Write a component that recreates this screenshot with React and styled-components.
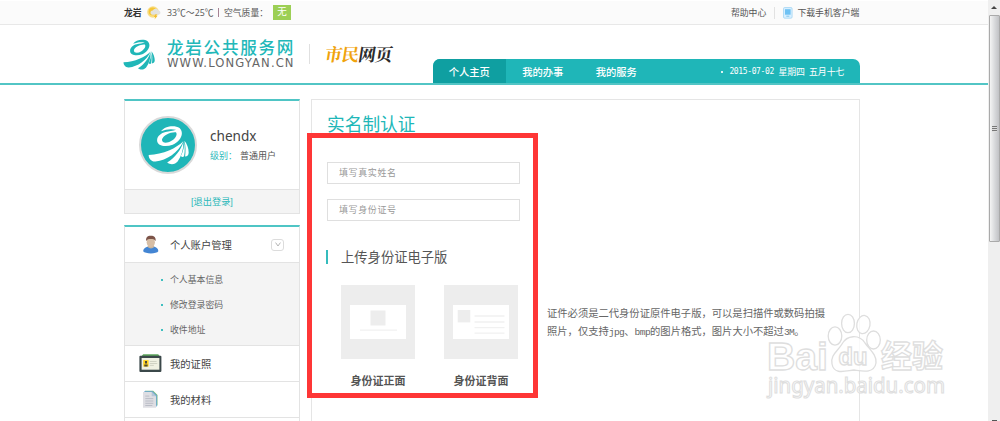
import React from 'react';
import styled, { createGlobalStyle } from 'styled-components';

const menuItems = ['个人基本信息', '修改登录密码', '收件地址'];

const LogoMark = () => (
    <svg viewBox='98 98 126 120' width='100%' height='100%' fill='currentColor'>
        <path
            fillRule='evenodd'
            d='M138 116C148 100 180 95 195 106C211 121 198 147 174 157C153 165 127 162 126 145C125 131 138 121 152 118C163 115 175 114 184 111C170 108 153 109 138 116ZM184 119C168 117 144 129 141 141C140 153 157 153 169 146C181 139 190 127 184 119Z'
        />
        <path d='M207 146C186 168 145 187 100 189C100 200 108 210 121 209C156 205 191 182 207 146Z' />
        <path d='M207 149C198 174 183 196 157 212C167 220 182 218 189 209C201 193 207 172 207 149Z' />
        <path d='M209 146C210 162 207 176 199 192C202 196 207 196 209 192C212 177 211 162 209 146Z' />
        <path d='M210 145C214 160 214 177 212 193C219 193 223 189 223 181C223 168 218 155 210 145Z' />
    </svg>
);

const WeatherIcon = () => (
    <svg width='14' height='15' viewBox='0 0 14 15'>
        <circle cx='6' cy='7' r='5.8' fill='#f8dd85' />
        <circle cx='5.6' cy='6.4' r='3.9' fill='#f5c638' />
        <path d='M3.5 8.1a2.3 2.3 0 0 1 2.3-2.5 3 3 0 0 1 5.5-.2 2.2 2.2 0 0 1 .6 4.3H5a1.7 1.7 0 0 1-1.5-1.6z' fill='#e2e2de' />
        <path d='M8.5 9.2 6.8 12h1.4L7.5 14.4 10.4 11H9l1-1.8z' fill='#f1bd2f' />
    </svg>
);

const UserIcon = () => (
    <svg width='18' height='20' viewBox='0 0 18 20'>
        <path d='M1.2 16.3C1.2 12.4 5 11.4 9 11.4s7.3 1 7.3 4.9C14.8 19.1 3 19.1 1.2 16.3z' fill='#4385d3' />
        <path d='M5.3 11.8 7 9.5h4l1.6 2.3Q9 15.3 5.3 11.8z' fill='#c7b49d' />
        <ellipse cx='8.8' cy='7.2' rx='4.1' ry='5' fill='#d7bea5' />
        <path d='M4.2 6C3.6 2.6 5.3.7 8.8.7s5.3 1.9 4.8 5.3C12.4 4.1 10.9 4 8.8 4S5.2 4.1 4.2 6z' fill='#7c5348' />
    </svg>
);

const CardIcon = () => (
    <svg width='23' height='19' viewBox='0 0 23 19'>
        <path d='M2.5 2.2 4.2.2h15l1.6 2z' fill='#5da45b' />
        <rect x='.4' y='1.8' width='22' height='16.2' rx='1' fill='#3b484a' />
        <rect x='2.6' y='4' width='17.8' height='11.7' fill='#f0f1e2' />
        <rect x='4.2' y='6.1' width='5.4' height='6.5' fill='#ffd21f' />
        <path d='M6 7h2v2.5H6zM5.3 10.4h3.3v2.2H5.3z' fill='#4c4934' />
        <path d='M10.8 7.5h6.8M10.8 9.5h7.4M10.8 11.4h4' stroke='#c8cabb' strokeWidth='.8' />
    </svg>
);

const PaperIcon = () => (
    <svg width='17' height='19' viewBox='0 0 17 19'>
        <path d='M3 .7h8.2L15.5 5v10.5H4z' fill='#76b982' />
        <path d='M2.2 1.3h8.3l4.3 4.3v11H2.2z' fill='#70a9d8' />
        <path d='M1 2h8.7L14 6.3v11.5H1z' fill='#dedee3' />
        <path d='M9.7 2v4.3H14z' fill='#b5c6d6' />
        <path d='M3.3 6.1h4M3.3 8.6h8M3.3 11h8M3.3 13.3h8M3.3 15.5h7' stroke='#b6b9c3' strokeWidth='.9' />
    </svg>
);

const PhoneIcon = () => (
    <svg width='10' height='12' viewBox='0 0 10 12'>
        <rect x='.5' y='.5' width='8.6' height='10.7' rx='1.2' fill='#d7efff' stroke='#a5d5f3' strokeWidth='.8' />
        <rect x='2' y='2.2' width='5.6' height='5.5' fill='#6fc2f4' />
        <path d='M3.3 9.2h3' stroke='#80c5ec' />
    </svg>
);

const BaiduMark = () => (
    <Watermark width='200' height='105' viewBox='760 308 200 105'>
        <g fill='#fff' fillOpacity='.75' stroke='#dedede' strokeWidth='1.3'>
            <text x='767' y='370' fontSize='38' fontWeight='bold' textLength='61' lengthAdjust='spacingAndGlyphs'>Bai</text>
            <ellipse cx='835' cy='336' rx='6.8' ry='9.2' />
            <ellipse cx='848' cy='323.5' rx='6.4' ry='9.2' />
            <ellipse cx='863.5' cy='324.5' rx='6.6' ry='9.2' transform='rotate(10 863 324)' />
            <ellipse cx='873.5' cy='340' rx='6.8' ry='9' />
            <path d='M842 344C847 335 859 334 865 343C870 350 877 355 876 363C874 374 862 371 854 370C845 371 834 375 832 364C830 355 838 351 842 344Z' />
            <text x='838.5' y='365' fontSize='23' fontWeight='bold' textLength='29' lengthAdjust='spacingAndGlyphs'>du</text>
            <text x='881' y='367' fontSize='31' fontWeight='bold' textLength='62' fontFamily='Noto Sans CJK SC'>经验</text>
            <text x='768' y='393' fontSize='21' textLength='177' lengthAdjust='spacingAndGlyphs' strokeWidth='1.1' fontFamily='Noto Sans'>jingyan.baidu.com</text>
        </g>
    </Watermark>
);

const App = () => {
    return (
        <Page>
            <GlobalStyle />
            <Content>
                <TopBar>
                    <Inner>
                        <City>龙岩</City>
                        <WeatherIcon />
                        <Temperature>33℃～25℃</Temperature>
                        <Pipe />
                        <Air>空气质量：</Air>
                        <Badge>无</Badge>
                        <TopLinks>
                            <TopLink>帮助中心</TopLink>
                            <TopLine />
                            <PhoneIcon />
                            <TopLink>下载手机客户端</TopLink>
                        </TopLinks>
                    </Inner>
                </TopBar>

                <Header>
                    <Inner>
                        <LogoBox>
                            <LogoMark />
                        </LogoBox>
                        <LogoText>
                            <LogoName>龙岩公共服务网</LogoName>
                            <LogoUrl>WWW.LONGYAN.CN</LogoUrl>
                        </LogoText>
                        <LogoLine />
                        <SubLogo>
                            <Orange>市民</Orange>网页
                        </SubLogo>
                        <Nav>
                            <NavItem $active>个人主页</NavItem>
                            <NavItem>我的办事</NavItem>
                            <NavItem>我的服务</NavItem>
                            <Today>
                                <Dot $light />
                                <Digits>2015-07-02</Digits>
                                <span>星期四</span>
                                <span>五月十七</span>
                            </Today>
                        </Nav>
                    </Inner>
                </Header>

                <Columns>
                    <Sidebar>
                        <Card>
                            <Profile>
                                <Avatar>
                                    <LogoMark />
                                </Avatar>
                                <div>
                                    <UserName>chendx</UserName>
                                    <Level>
                                        <LevelLabel>级别：</LevelLabel>普通用户
                                    </Level>
                                </div>
                            </Profile>
                            <Logout>[退出登录]</Logout>
                        </Card>
                        <Card>
                            <MenuRow>
                                <IconCell>
                                    <UserIcon />
                                </IconCell>
                                个人账户管理
                                <Toggle>
                                    <svg width='6' height='5' viewBox='0 0 6 5'>
                                        <path d='M.6.6 3 4 5.4.6' fill='none' stroke='#b5b5b5' />
                                    </svg>
                                </Toggle>
                            </MenuRow>
                            <SubMenu>
                                {menuItems.map((item) => (
                                    <SubItem key={item}>
                                        <Dot />
                                        {item}
                                    </SubItem>
                                ))}
                            </SubMenu>
                            <MenuRow>
                                <IconCell>
                                    <CardIcon />
                                </IconCell>
                                我的证照
                            </MenuRow>
                            <MenuRow>
                                <IconCell>
                                    <PaperIcon />
                                </IconCell>
                                我的材料
                            </MenuRow>
                            <MenuRow />
                        </Card>
                    </Sidebar>

                    <Main>
                        <Title>实名制认证</Title>
                        <Input placeholder='填写真实姓名' />
                        <Input placeholder='填写身份证号' />
                        <SectionTitle>上传身份证电子版</SectionTitle>
                        <UploadRow>
                            <Upload>
                                <Thumb>
                                    <svg width='56' height='34' viewBox='0 0 56 34'>
                                        <path d='M0 0h56v34H0z' fill='#fff' />
                                        <path d='M20.5 5.5h15v15h-15z' fill='#ededed' />
                                        <path d='M10 25.2h37' stroke='#f1f1f1' strokeWidth='1.3' />
                                    </svg>
                                </Thumb>
                                <Caption>身份证正面</Caption>
                            </Upload>
                            <Upload>
                                <Thumb>
                                    <svg width='56' height='34' viewBox='0 0 56 34'>
                                        <path d='M0 0h56v34H0z' fill='#fff' />
                                        <path d='M4.7 5h12.6v12.4H4.7z' fill='#ededed' />
                                        <path d='M21.5 11h30M21.5 17h30M21.5 22.7h30M21.5 28.2h30' stroke='#f1f1f1' strokeWidth='1.3' />
                                    </svg>
                                </Thumb>
                                <Caption>身份证背面</Caption>
                            </Upload>
                            <Tip>
                                证件必须是二代身份证原件电子版，可以是扫描件或数码拍摄
                                <br />
                                照片，仅支持<Latin>jpg</Latin>、<Latin>bmp</Latin>的图片格式，图片大小不超过<Latin>3M</Latin>。
                            </Tip>
                        </UploadRow>
                        <Highlight />
                    </Main>
                </Columns>
            </Content>
            <BaiduMark />
            <ScrollTrack>
                <ArrowUp />
                <ScrollThumb>
                    <Grip />
                </ScrollThumb>
                <ArrowDown />
            </ScrollTrack>
        </Page>
    );
};

export default App;

const GlobalStyle = createGlobalStyle`
    * {
        box-sizing: border-box;
    }

    body {
        margin: 0;
        background: #fff;
        color: #555;
        font-family: 'Liberation Sans', 'Noto Sans CJK SC', sans-serif;
        font-size: 9px;
    }
`;

const Page = styled.div`
    position: relative;
    display: flex;
    width: 1000px;
    height: 421px;
    overflow: hidden;
`;

const Content = styled.div`
    width: 988px;
    height: 421px;
    overflow: hidden;
`;

const Inner = styled.div`
    display: flex;
    align-items: center;
    width: 735.5px;
    height: 100%;
    margin-left: 124px;
    white-space: nowrap;
`;

const TopBar = styled.div`
    height: 25px;
    background: #fbfbfb;
    border-top: 1px solid #fff;
    border-bottom: 1px solid #e8e8e8;
`;

const City = styled.div`
    width: 23px;
    color: #333;
    font-size: 8.8px;
    font-weight: bold;
`;

const Temperature = styled.div`
    width: 47px;
    margin-left: 6px;
    font-family: 'Open Sans', 'Noto Sans CJK SC', sans-serif;
    font-size: 8.8px;
`;

const Pipe = styled.div`
    width: 1px;
    height: 9px;
    margin: 0 5px 0 4px;
    background: #a58294;
`;

const Air = styled.div`
    width: 49px;
    font-size: 8.8px;
`;

const Badge = styled.div`
    width: 18px;
    height: 15px;
    background: #9ccf55;
    color: #fff;
    font-size: 9.5px;
    line-height: 14px;
    text-align: center;
`;

const TopLinks = styled.div`
    display: flex;
    align-items: center;
    gap: 4px;
    margin-left: auto;
`;

const TopLink = styled.div`
    font-size: 8.9px;
`;

const TopLine = styled.div`
    width: 1px;
    height: 12px;
    margin: 0 4px;
    background: #e2e2e2;
`;

const Header = styled.div`
    height: 60px;
    border-bottom: 2px solid #52c5c5;
`;

const LogoBox = styled.div`
    width: 32px;
    height: 31px;
    margin-left: -1px;
    color: #20b7b8;
`;

const LogoText = styled.div`
    width: 142px;
    margin: 1px 0 0 12px;
`;

const LogoName = styled.div`
    color: #22b8b9;
    font-size: 16.6px;
    font-weight: 500;
    letter-spacing: 1.7px;
    line-height: 17px;
`;

const LogoUrl = styled.div`
    color: #666;
    font-family: 'DejaVu Sans', sans-serif;
    font-size: 11.6px;
    letter-spacing: 1.1px;
    line-height: 13px;
`;

const LogoLine = styled.div`
    width: 1px;
    height: 20px;
    background: #e0e0e0;
`;

const SubLogo = styled.div`
    margin-left: 15px;
    color: #2b2b2b;
    font-family: 'Noto Serif CJK SC', 'Noto Sans CJK SC', serif;
    font-size: 17.5px;
    font-weight: bold;
    letter-spacing: -0.7px;
    line-height: 20px;
    transform: skewX(-9deg);
`;

const Orange = styled.span`
    color: #f0a30c;
`;

const Nav = styled.div`
    display: flex;
    align-self: flex-end;
    width: 427px;
    height: 24px;
    margin-left: auto;
    overflow: hidden;
    border-radius: 7px 7px 0 0;
    background: #1fb6b8;
    color: #fff;
`;

const NavItem = styled.div`
    width: 73.5px;
    background: ${({ $active }) => ($active ? '#0f9fa1' : 'transparent')};
    font-size: 10.3px;
    font-weight: 500;
    line-height: 27px;
    text-align: center;
`;

const Today = styled.div`
    display: flex;
    align-items: center;
    gap: 4px;
    margin-left: auto;
    padding: 1px 15px 0 0;
    font-size: 8.9px;
`;

const Digits = styled.span`
    width: 45px;
    font-family: 'DejaVu Sans Mono', monospace;
    font-size: 8px;
    letter-spacing: -0.36px;
`;

const Dot = styled.i`
    width: 2px;
    height: 2px;
    margin-right: ${({ $light }) => ($light ? '2px' : '7px')};
    background: ${({ $light }) => ($light ? '#d7f3f3' : '#3fbfc0')};
`;

const Columns = styled.div`
    display: flex;
    gap: 11px;
    margin: 14px 0 0 124px;
`;

const Sidebar = styled.div`
    display: flex;
    flex-direction: column;
    gap: 11px;
    width: 176px;
`;

const Card = styled.div`
    border: 1px solid #e3e3e3;
    border-top: 2px solid #4fc5c5;
`;

const Profile = styled.div`
    display: flex;
    align-items: center;
    height: 88px;
    padding-left: 15px;
`;

const Avatar = styled.div`
    width: 58px;
    height: 58px;
    margin: 0 13px 0 -1px;
    padding: 7px 6px 7px 7px;
    border: 2px solid #d9d9d9;
    border-radius: 50%;
    background: #1fb6b8;
    color: #fff;
`;

const UserName = styled.div`
    margin-top: 3px;
    color: #444;
    font-family: 'Noto Sans', sans-serif;
    font-size: 13.6px;
    line-height: 20px;
`;

const Level = styled.div`
    display: flex;
    font-size: 9px;
    line-height: 21px;
`;

const LevelLabel = styled.span`
    width: 30px;
    color: #2cb9ba;
`;

const Logout = styled.div`
    height: 24px;
    border-top: 1px solid #e3e3e3;
    background: #f4f4f4;
    color: #2cb9ba;
    font-size: 9.2px;
    line-height: 24px;
    text-align: center;
`;

const MenuRow = styled.div`
    display: flex;
    align-items: center;
    height: 36px;
    border-bottom: 1px solid #e3e3e3;
    color: #444;
    font-size: 10.3px;
`;

const IconCell = styled.div`
    display: flex;
    justify-content: center;
    width: 23px;
    margin: 0 8px 0 14px;
`;

const Toggle = styled.div`
    display: flex;
    align-items: center;
    justify-content: center;
    width: 13px;
    height: 12px;
    margin: 0 15px 0 auto;
    border: 1px solid #dcdcdc;
    border-radius: 3px;
`;

const SubMenu = styled.div`
    height: 83px;
    padding-top: 4px;
    border-bottom: 1px solid #e3e3e3;
    background: #f4f4f4;
`;

const SubItem = styled.div`
    display: flex;
    align-items: center;
    height: 25px;
    padding-left: 36px;
    color: #666;
    font-size: 8.9px;
`;

const Main = styled.div`
    position: relative;
    width: 548.5px;
    height: 330px;
    padding: 11px 0 0 15px;
    border: 1px solid #e5e5e5;
`;

const Title = styled.div`
    height: 51px;
    color: #20b7b8;
    font-size: 17.7px;
    line-height: 28px;
`;

const Input = styled.input`
    display: block;
    width: 193px;
    height: 22px;
    margin-bottom: 15px;
    padding: 0 0 1px 11px;
    border: 1px solid #dfdfdf;
    background: #fff;
    font-family: inherit;
    font-size: 9px;
    letter-spacing: 0.6px;

    &::placeholder {
        color: #999;
    }
`;

const SectionTitle = styled.div`
    height: 14px;
    margin: 29px 0 0 -1px;
    padding-left: 13px;
    border-left: 2px solid #35bcbd;
    color: #555;
    font-size: 13.3px;
    line-height: 15px;
`;

const UploadRow = styled.div`
    display: flex;
    margin-top: 21px;
    padding-left: 14px;
`;

const Upload = styled.div`
    width: 74px;
    margin-right: 29px;
`;

const Thumb = styled.div`
    display: flex;
    align-items: center;
    justify-content: center;
    height: 74px;
    background: #ededed;
`;

const Caption = styled.div`
    margin-top: 13px;
    color: #555;
    font-size: 11px;
    font-weight: bold;
    line-height: 18px;
    text-align: center;
`;

const Tip = styled.div`
    padding-top: 20px;
    color: #666;
    font-size: 10.3px;
    line-height: 17.6px;
    white-space: nowrap;
`;

const Latin = styled.span`
    font-family: 'Liberation Mono', monospace;
    font-size: 9.6px;
    letter-spacing: -0.6px;
`;

const Highlight = styled.div`
    position: absolute;
    top: 33px;
    left: -5px;
    width: 231px;
    height: 265px;
    border: 5px solid #fe3636;
`;

const Watermark = styled.svg`
    position: absolute;
    top: 308px;
    left: 760px;
    font-family: 'Liberation Sans', sans-serif;
`;

const ScrollTrack = styled.div`
    display: flex;
    flex-direction: column;
    align-items: center;
    width: 12px;
    height: 421px;
    background: #efefef;
`;

const ArrowUp = styled.div`
    margin: 6px 0 6px;
    border: 3px solid transparent;
    border-top: 0;
    border-bottom: 3px solid #444;
`;

const ScrollThumb = styled.div`
    display: flex;
    align-items: center;
    justify-content: center;
    width: 11px;
    height: 227px;
    border: 1px solid #aaa;
    border-radius: 1px;
    background: linear-gradient(90deg, #f4f4f4, #d9dadc 50%, #c1c2c5);
`;

const Grip = styled.div`
    width: 5px;
    height: 6px;
    background: repeating-linear-gradient(#777 0 1px, #ddd 1px 2px);
`;

const ArrowDown = styled.div`
    width: 5px;
    height: 1px;
    margin-top: auto;
    background: #555;
`;
